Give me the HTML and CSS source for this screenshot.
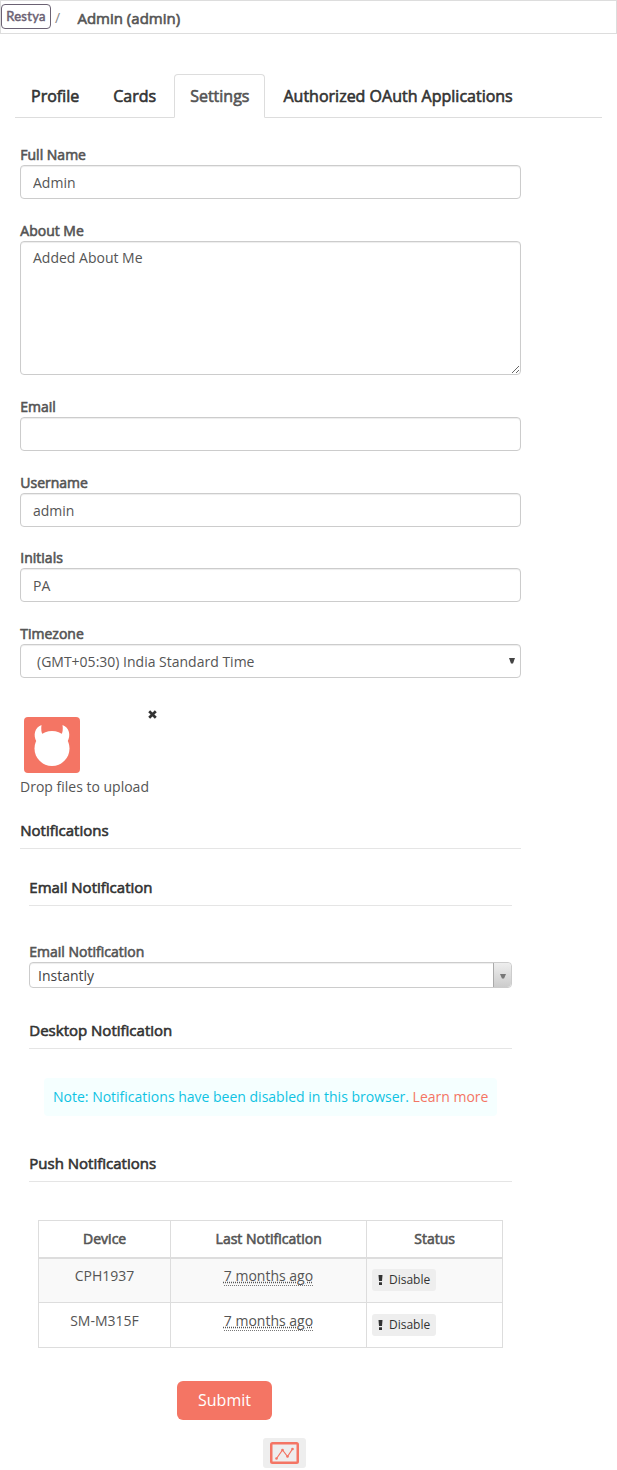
FILE: index.html
```html
<!DOCTYPE html>
<html lang="en">
<head>
<meta charset="utf-8">
<title>Admin (admin)</title>
<link rel="stylesheet" href="styles.css">
</head>
<body>
<header class="topbar">
  <a class="logo">Restya</a><span class="slash">/</span><span class="user strong">Admin (admin)</span>
</header>
<nav class="tabs strong">
  <a class="tab">Profile</a><a class="tab">Cards</a><a class="tab active">Settings</a><a class="tab">Authorized OAuth Applications</a>
</nav>
<form class="settings">
  <div class="group"><label class="strong">Full Name</label><input class="control" type="text" value="Admin"></div>
  <div class="group"><label class="strong">About Me</label><textarea class="control area">Added About Me</textarea></div>
  <div class="group"><label class="strong">Email</label><input class="control" type="text"></div>
  <div class="group tight"><label class="strong">Username</label><input class="control" type="text" value="admin"></div>
  <div class="group"><label class="strong">Initials</label><input class="control" type="text" value="PA"></div>
  <div class="group"><label class="strong">Timezone</label>
    <div class="control select"><span>(GMT+05:30) India Standard Time</span><svg width="6" height="6" viewBox="0 0 6 6"><path d="M0 0h6L4 5.500H2z" fill="#444"/></svg></div>
  </div>
  <div class="upload">
    <svg class="avatar" width="56" height="56" viewBox="0 0 56 56"><rect width="56" height="56" rx="4" fill="#f47564"/><circle cx="28" cy="31.500" r="17.500" fill="#fff"/><path d="M17.500 8C10.500 10.500 9 18.500 12.500 24.500L19 18.500Q16.500 14.500 17.500 8zM38.500 8C45.500 10.500 47 18.500 43.500 24.500L37 18.500Q39.500 14.500 38.500 8z" fill="#fff"/></svg>
    <svg class="remove" width="9" height="9" viewBox="0 0 9 9"><path d="M1.200 1.200l6.600 6.600M7.800 1.200L1.200 7.800" stroke="#333" stroke-width="2.700"/></svg>
  </div>
  <div class="drop">Drop files to upload</div>
  <h2 class="heading strong">Notifications</h2>
  <div class="sections">
    <h2 class="heading strong">Email Notification</h2>
    <div class="email-group"><label class="strong">Email Notification</label>
      <div class="chooser"><span>Instantly</span><i class="arrow"><svg width="6" height="5" viewBox="0 0 6 5"><path d="M0 0h6L4 4.500H2z" fill="#777"/></svg></i></div>
    </div>
    <h2 class="heading strong">Desktop Notification</h2>
    <div class="note">Note: Notifications have been disabled in this browser. <a>Learn more</a></div>
    <h2 class="heading strong">Push Notifications</h2>
    <table class="devices">
      <thead class="strong"><tr><th class="c1">Device</th><th class="c2">Last Notification</th><th>Status</th></tr></thead>
      <tbody>
        <tr class="odd"><td>CPH1937</td><td><abbr>7 months ago</abbr></td><td class="status"><a class="disable"><svg width="5" height="10" viewBox="0 0 5 10"><path d="M.5 0h4L4 6H1zM1 7.200h3V10H1z" fill="#333"/></svg>Disable</a></td></tr>
        <tr><td>SM-M315F</td><td><abbr>7 months ago</abbr></td><td class="status"><a class="disable"><svg width="5" height="10" viewBox="0 0 5 10"><path d="M.5 0h4L4 6H1zM1 7.200h3V10H1z" fill="#333"/></svg>Disable</a></td></tr>
      </tbody>
    </table>
  </div>
  <button class="submit" type="button">Submit</button>
</form>
<footer class="footer"><a class="chart"><svg width="29" height="22" viewBox="0 0 29 22"><rect x="1.500" y="1.500" width="26" height="19" rx="1" fill="none" stroke="#f47564" stroke-width="3"/><rect x="2.500" y="2.500" width="24" height="17" fill="#eee"/><path d="M6.500 16.500l6-8.500 5 6.500 5-7.500" fill="none" stroke="#f47564" stroke-width="1.200"/><g fill="#f47564"><circle cx="6.500" cy="16.500" r="1.300"/><circle cx="12.500" cy="8" r="1.300"/><circle cx="17.500" cy="14.500" r="1.300"/><circle cx="22.500" cy="7" r="1.300"/></g></svg></a></footer>
</body>
</html>
```
FILE: styles.css
```css
* { box-sizing: border-box; }
body { margin: 0; background: #fff; color: #555; font: 14px/20px "Open Sans", sans-serif; }
.strong { font-weight: 400; -webkit-text-stroke: 0.6px currentColor; text-indent: 0.3px; }
.topbar { display: flex; height: 34px; border: 1px solid #ddd; align-items: flex-start; }
.logo { width: 50px; height: 25px; margin-top: 3px; border: 1px solid #6b6273; border-radius: 4px; color: #6b6273; font: 400 13px/23px Lato, sans-serif; letter-spacing: 0.3px; text-align: center; -webkit-text-stroke: 0.5px currentColor; }
.slash { margin: 7px 0 0 4px; color: #888; }
.user { margin: 7px 0 0 17px; font-size: 15px; }
.tabs { display: flex; gap: 2px; height: 44px; margin: 40px 15px 0; border-bottom: 1px solid #ddd; font-size: 16px; color: #333; text-indent: 0; }
.tab { height: 44px; padding: 10px 15px; border: 1px solid transparent; line-height: 22px; border-radius: 4px 4px 0 0; white-space: nowrap; }
.tab.active { color: #555; background: #fff; border-color: #ddd #ddd #fff; }
.settings { width: 501px; margin: 27px 0 0 20px; }
.group { margin-bottom: 22px; }
.group.tight { margin-bottom: 21px; }
label { display: block; height: 20px; }
.control { display: block; width: 100%; height: 34px; padding: 6px 12px; border: 1px solid #ccc; border-radius: 4px; background: #fff; color: #555; font: 14px/20px "Open Sans", sans-serif; box-shadow: inset 0 1px 1px rgba(0,0,0,.075); outline: 0; }
.area { height: 134px; resize: vertical; }
.select { display: flex; justify-content: space-between; padding: 7px 5px 5px 16px; }
.select svg { margin-top: 6px; }
.upload { display: flex; height: 77px; margin-top: 22px; padding: 0 0 0 4px; }
.avatar { margin-top: 17px; }
.remove { margin: 10px 0 0 68px; }
.drop { height: 20px; }
.heading { height: 29px; margin: 23px 0 0; padding-bottom: 7px; border-bottom: 1px solid #e5e5e5; color: #333; font-size: 15px; line-height: 21px; }
.sections { padding: 5px 9px 0; }
.email-group { margin-top: 36px; }
.chooser { display: flex; height: 26px; border: 1px solid #ccc; border-radius: 4px; padding-left: 8px; justify-content: space-between; line-height: 26px; color: #444; box-shadow: inset 0 1px 1px rgba(0,0,0,.075); }
.arrow { width: 18px; border-left: 1px solid #aaa; border-radius: 0 4px 4px 0; background: linear-gradient(#eee, #ccc); display: flex; align-items: center; justify-content: center; padding-top: 3px; }
.email-group + .heading { margin-top: 32px; }
.note { height: 38px; margin: 29px 15px 0; padding: 9px; border-radius: 4px; background: #f5ffff; color: #0fc3e3; white-space: nowrap; }
.note a { color: #f47564; }
.note + .heading { margin-top: 37px; }
.devices { width: 465px; margin: 38px 0 0 9px; border-collapse: collapse; table-layout: fixed; text-align: center; }
.devices th, .devices td { border: 1px solid #ddd; padding: 8px; font-weight: 400; vertical-align: top; }
.devices th { height: 37px; border-bottom-width: 2px; }
.devices td { height: 45px; }
.devices .odd td { height: 44px; padding-top: 7px; }
.c1 { width: 132px; }
.c2 { width: 196px; }
.odd { background: #f9f9f9; }
abbr { border-bottom: 1px dotted #777; text-decoration: underline dotted; }
.devices .status, .devices .odd .status { text-align: left; padding: 10px 5px 0; }
.devices tr:last-child .status { padding-top: 11px; }
.disable { display: flex; align-items: center; gap: 6px; width: 64px; height: 22px; padding-left: 6px; border-radius: 3px; background: #eee; color: #333; font-size: 12px; }
.submit { display: block; width: 95px; height: 39px; margin: 33px 0 0 157px; border: 0; border-radius: 6px; background: #f47564; color: #fff; font: 16px/22px "Open Sans", sans-serif; }
.footer { margin: 18px 0 0 263px; }
.chart { display: flex; width: 43px; height: 30px; align-items: center; justify-content: center; border-radius: 3px; background: #eee; }
```
